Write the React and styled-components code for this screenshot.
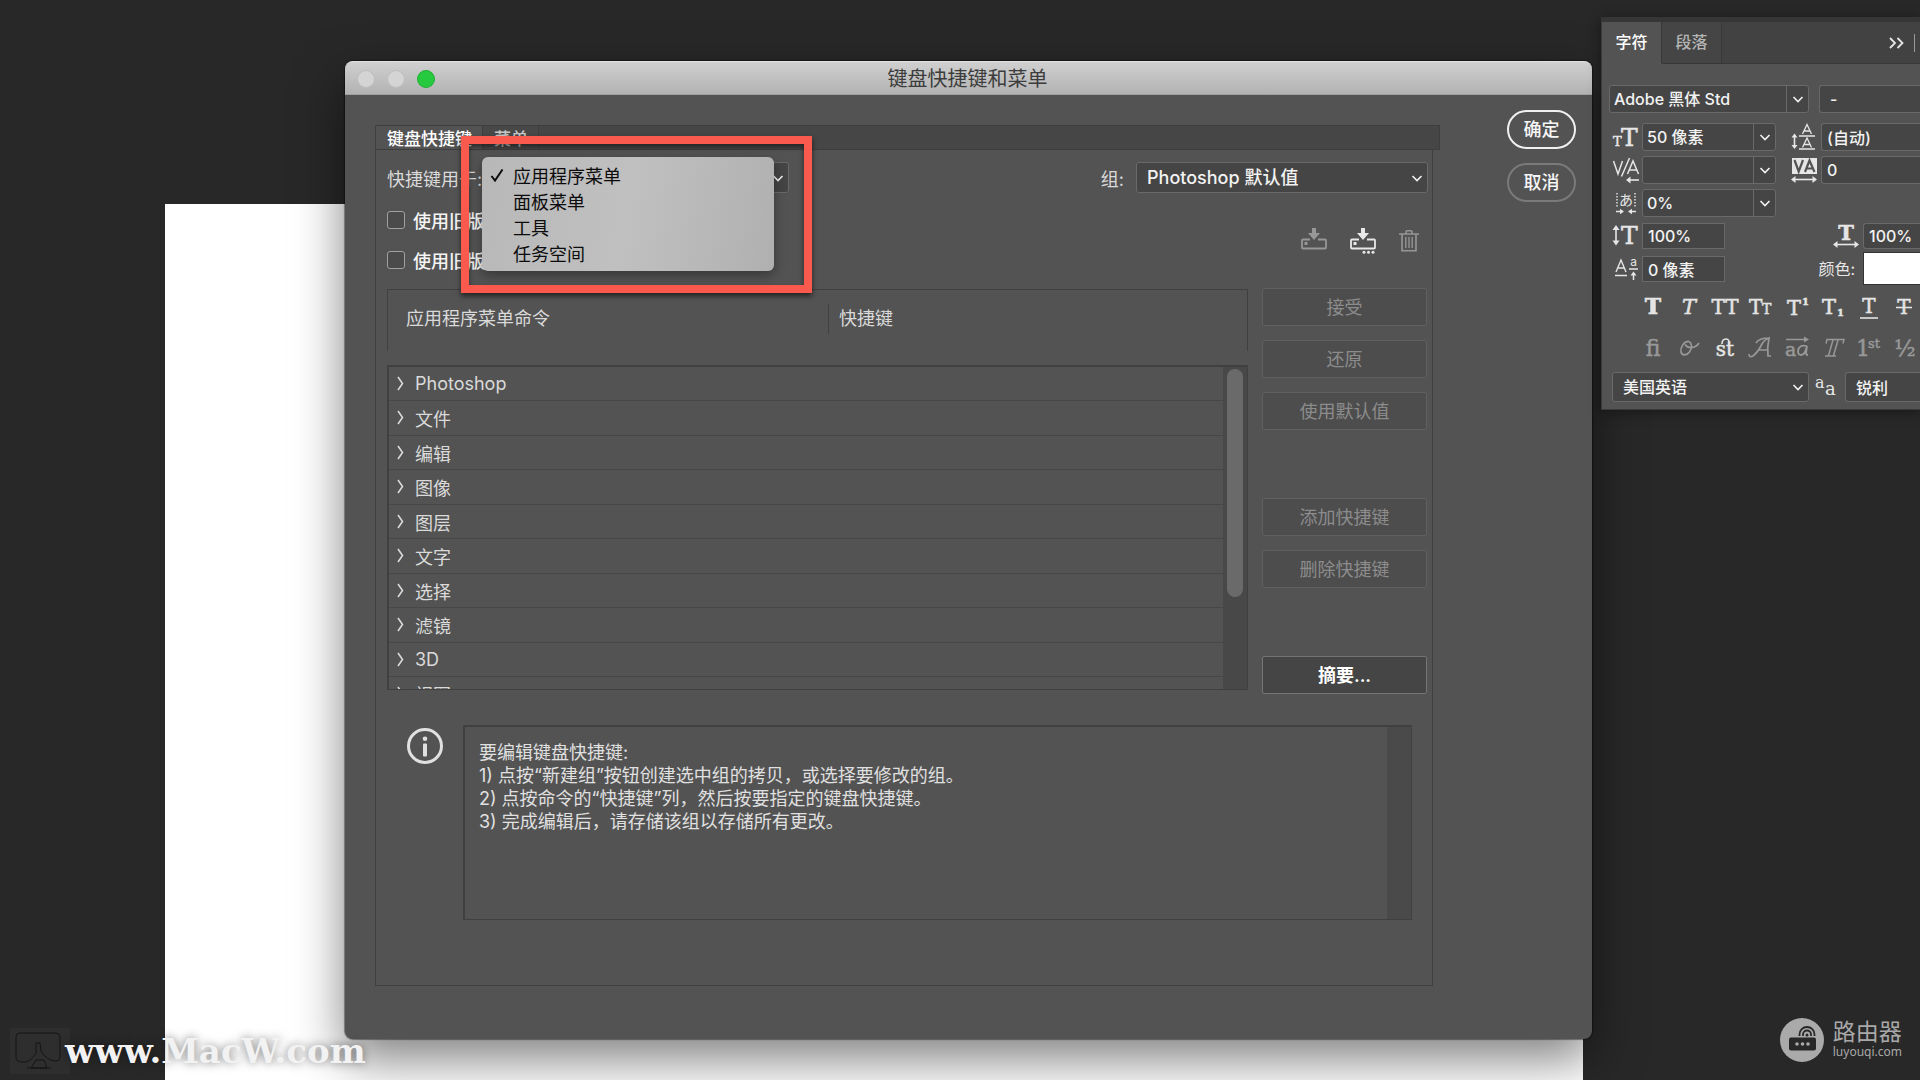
import React, { useState } from 'react';
import styled, { createGlobalStyle } from 'styled-components';

const SANS = "Inter, 'Noto Sans CJK SC', sans-serif";
const SERIF = "'DejaVu Serif', 'Liberation Serif', serif";

const menuItems = ['应用程序菜单', '面板菜单', '工具', '任务空间'];

const commands = [
  'Photoshop',
  '文件',
  '编辑',
  '图像',
  '图层',
  '文字',
  '选择',
  '滤镜',
  '3D',
  '视图',
];

const instructions = [
  '要编辑键盘快捷键:',
  '1) 点按“新建组”按钮创建选中组的拷贝，或选择要修改的组。',
  '2) 点按命令的“快捷键”列，然后按要指定的键盘快捷键。',
  '3) 完成编辑后，请存储该组以存储所有更改。',
];

const Chevron = () => (
  <svg width="12" height="8" viewBox="0 0 12 8" fill="none" stroke="currentColor">
    <path d="M1.5 2 6 6.500l4.500-4.500" strokeWidth="1.600" />
  </svg>
);

const RowArrow = () => (
  <svg width="8" height="14" viewBox="0 0 8 14" fill="none" stroke="currentColor">
    <path d="M2 0 6.500 6.500 2 13" strokeWidth="1.600" />
  </svg>
);

const SaveIcon = ({ dots }) => (
  <svg width="26" height="26" viewBox="0 0 26 26">
    <path d="M11 0h4v5h4l-6 7-6-7h4z" fill="currentColor" />
    <path
      d="M9 11.500H2q-1 0-1 1v7q0 1 1 1h22q1 0 1-1v-7q0-1-1-1h-7"
      fill="none"
      stroke="currentColor"
      strokeWidth="1.8"
    />
    <rect x="3.500" y="14" width="3" height="3" fill="currentColor" />
    {dots && (
      <g fill="currentColor">
        <circle cx="14" cy="24.300" r="1.500" />
        <circle cx="18.500" cy="24.300" r="1.500" />
        <circle cx="23" cy="24.300" r="1.500" />
      </g>
    )}
  </svg>
);

const TrashIcon = () => (
  <svg width="20" height="24" viewBox="0 0 20 24" fill="none" stroke="currentColor">
    <path d="M0 5h20M7 4.500V3q0-1.200 1.200-1.200h3.600Q13 1.800 13 3v1.500" strokeWidth="1.600" />
    <path d="M3 5v16.800h14V5" strokeWidth="1.600" />
    <path d="M6.800 8v11M10 8v11M13.200 8v11" strokeWidth="1.300" />
  </svg>
);

const InfoIcon = () => (
  <svg width="36" height="36" viewBox="0 0 36 36">
    <circle cx="18" cy="18" r="16.500" fill="none" stroke="currentColor" strokeWidth="3" />
    <circle cx="18" cy="10.800" r="2.300" fill="currentColor" />
    <rect x="16" y="15.500" width="4" height="13" rx="1" fill="currentColor" />
  </svg>
);

const CheckIcon = () => (
  <svg width="14" height="14" viewBox="0 0 14 14" fill="none" stroke="currentColor">
    <path d="M1.500 8 5 12.500 12.500 1.500" strokeWidth="2" />
  </svg>
);

const Glyph = ({ x = 0, y, size, bold, sans, thin, italic, anchor, children }) => (
  <text
    x={x}
    y={y}
    fontSize={size}
    fontFamily={sans ? SANS : SERIF}
    fontWeight={bold ? 700 : 400}
    fontStyle={italic ? 'italic' : 'normal'}
    textAnchor={anchor}
    fill="currentColor"
    stroke="currentColor"
    strokeWidth={sans || thin ? 0 : 0.5}
  >
    {children}
  </text>
);

const SizeIcon = () => (
  <svg width="26" height="24" viewBox="0 0 26 24">
    <Glyph y={21} size={13}>T</Glyph>
    <Glyph x={8} y={21} size={25}>T</Glyph>
  </svg>
);

const LeadingIcon = () => (
  <svg width="26" height="26" viewBox="0 0 26 26" stroke="currentColor" fill="none">
    <path d="M8 12h16M8 25h16" strokeWidth="1.400" />
    <path d="m11.500 10 4.500-9.500 4.500 9.500M13 7h6M11.500 23.500 16 14l4.500 9.500M13 20.500h6" strokeWidth="1.300" />
    <path d="M3.500 12v10" strokeWidth="1.600" />
    <path d="m.5 13.500 3-4 3 4zM.5 21l3 4 3-4z" fill="currentColor" stroke="none" />
  </svg>
);

const KerningIcon = () => (
  <svg width="26" height="26" viewBox="0 0 26 26" stroke="currentColor" fill="none">
    <path d="m.500 4 4.500 13L9.500 4M8.500 19.500 16.500 1M14.500 17 20 4l5.500 13M16.500 13h7" strokeWidth="1.500" />
    <path d="M16 23h10" strokeWidth="1.600" />
    <path d="m17.500 19.500-4.500 3.500 4.500 3.500z" fill="currentColor" stroke="none" />
  </svg>
);

const TrackingIcon = () => (
  <svg width="26" height="26" viewBox="0 0 26 26">
    <rect x="1" y="1" width="25" height="16" fill="currentColor" />
    <path d="m3.500 3 4.200 11.500L12 3M14 15l4.500-11.500 5 11.500M16 11.500h5.500" fill="none" stroke="#535353" strokeWidth="2.200" />
    <path d="M3 22.500h20" stroke="currentColor" strokeWidth="1.600" />
    <path d="M4.500 19 0 22.500 4.500 26zM21.500 19l4.500 3.500-4.500 3.500z" fill="currentColor" />
  </svg>
);

const TsumeIcon = () => (
  <svg width="22" height="24" viewBox="0 0 22 24">
    <path d="M2 2v15M20 2v15" stroke="currentColor" strokeWidth="1.400" strokeDasharray="1.500 1.500" />
    <Glyph x={11} y={14} size={14} sans anchor="middle">あ</Glyph>
    <path d="M1 20.500h5M21 20.500h-5" stroke="currentColor" strokeWidth="1.400" />
    <path d="M5 17.800 9 20.500l-4 2.700zM17 17.800l-4 2.700 4 2.700z" fill="currentColor" />
  </svg>
);

const VScaleIcon = () => (
  <svg width="28" height="24" viewBox="0 0 28 24">
    <path d="M4 4v15" stroke="currentColor" strokeWidth="1.600" />
    <path d="m.5 6 3.500-5 3.500 5zM.5 16.500l3.500 5 3.500-5z" fill="currentColor" />
    <Glyph x={9} y={20} size={25}>T</Glyph>
  </svg>
);

const HScaleIcon = () => (
  <svg width="26" height="24" viewBox="0 0 26 24">
    <Glyph x={13} y={16} size={21} bold anchor="middle">T</Glyph>
    <path d="M3 20.500h20" stroke="currentColor" strokeWidth="1.600" />
    <path d="M4.500 17 0 20.500 4.500 24zM21.500 17l4.500 3.500-4.500 3.500z" fill="currentColor" />
  </svg>
);

const BaselineIcon = () => (
  <svg width="24" height="24" viewBox="0 0 24 24" fill="none" stroke="currentColor">
    <path d="m2 15 5-12 5 12M4 11h6M1 18.500h12" strokeWidth="1.400" />
    <path d="M15 12h9M19.500 16v7" strokeWidth="1.500" />
    <path d="m16.500 18.500 3-4 3 4z" fill="currentColor" stroke="none" />
    <Glyph x={19.5} y={9} size={12} sans anchor="middle">a</Glyph>
  </svg>
);

const AntiAliasIcon = () => (
  <svg width="22" height="20" viewBox="0 0 22 20">
    <Glyph x={-1} y={11} size={16} thin>a</Glyph>
    <Glyph x={9} y={18} size={18} thin>a</Glyph>
  </svg>
);

const textStyles = [
  {
    label: '仿粗体',
    art: (
      <>
        <Glyph x={14} y={19} size={22} bold anchor="middle">T</Glyph>
        <path d="M12 5h4v13h-4z" fill="currentColor" stroke="currentColor" />
      </>
    ),
  },
  { label: '仿斜体', art: <Glyph x={14} y={19} size={21} italic anchor="middle">T</Glyph> },
  { label: '全部大写字母', art: <Glyph x={14} y={19} size={20} anchor="middle">TT</Glyph> },
  {
    label: '小型大写字母',
    art: (
      <>
        <Glyph x={2} y={19} size={20}>T</Glyph>
        <Glyph x={15} y={19} size={14}>T</Glyph>
      </>
    ),
  },
  {
    label: '上标',
    art: (
      <>
        <Glyph x={4} y={20} size={21}>T</Glyph>
        <Glyph x={19} y={10} size={10} bold>1</Glyph>
      </>
    ),
  },
  {
    label: '下标',
    art: (
      <>
        <Glyph x={3} y={19} size={21}>T</Glyph>
        <Glyph x={18} y={21} size={10} bold>1</Glyph>
      </>
    ),
  },
  {
    label: '下划线',
    art: (
      <>
        <Glyph x={14} y={18} size={20} anchor="middle">T</Glyph>
        <path d="M5 23h18" stroke="currentColor" strokeWidth="1.600" />
      </>
    ),
  },
  {
    label: '删除线',
    art: (
      <>
        <Glyph x={13} y={19} size={20} anchor="middle">T</Glyph>
        <path d="M5 12.500h16" stroke="currentColor" strokeWidth="1.600" />
      </>
    ),
  },
];

const openType = [
  { label: '标准连字', art: <Glyph x={14} y={19} size={22} anchor="middle">ﬁ</Glyph> },
  {
    label: '上下文替代字',
    art: (
      <g fill="none" stroke="currentColor" strokeWidth="1.700">
        <path d="M14 4.500c-5-.5-9 6-8 10.500.8 3.500 5.500 4 8.500 0 3-4 2.500-9-.5-10.500M10 7.500c3 4.500 10 4.500 14-1.500" />
      </g>
    ),
  },
  {
    label: '自由连字',
    on: true,
    art: (
      <>
        <Glyph x={14} y={19} size={20} anchor="middle">st</Glyph>
        <path d="M11 7q0-5 4-5t3 6" fill="none" stroke="currentColor" strokeWidth="1.600" />
      </>
    ),
  },
  {
    label: '花饰字',
    art: (
      <path
        d="M2 17q0 4 4 2Q11 15 15 7q2-4 7-6-2 9-1 18h3M11 13h10M22 1Q12 1 9 6"
        fill="none"
        stroke="currentColor"
        strokeWidth="1.700"
      />
    ),
  },
  {
    label: '文体替代字',
    art: (
      <>
        <Glyph x={2} y={19} size={19}>a</Glyph>
        <path
          d="M24 9q-8-2-9 5 0 4 3 4 4 0 6-9l-1 7q0 2 2 2"
          fill="none"
          stroke="currentColor"
          strokeWidth="1.800"
        />
        <path d="M3 2.500h20" stroke="currentColor" strokeWidth="1.500" />
        <path d="m21 -.5 5 3-5 3z" fill="currentColor" />
      </>
    ),
  },
  {
    label: '标题替代字',
    art: (
      <path
        d="M7 6.500 8 2.500h17l-1 4M14 3 9.500 18.500M19 3l-4.500 15.500M6 19h11"
        fill="none"
        stroke="currentColor"
        strokeWidth="1.500"
      />
    ),
  },
  {
    label: '序数字',
    art: (
      <>
        <Glyph x={1} y={19} size={22}>1</Glyph>
        <Glyph x={13} y={11} size={13}>st</Glyph>
      </>
    ),
  },
  { label: '分数字', art: <Glyph x={14} y={19} size={22} anchor="middle">½</Glyph> },
];

function Dropdown({ label, value, split, ...rest }) {
  return (
    <SelectBox $split={split} {...rest}>
      <select aria-label={label} defaultValue={value}>
        <option>{value}</option>
      </select>
      <span>
        <Chevron />
      </span>
    </SelectBox>
  );
}

function ShortcutDialog() {
  const [selected, setSelected] = useState(menuItems[0]);

  return (
    <Dialog role="dialog" aria-labelledby="dialog-title">
      <TitleBar>
        <Lights>
          <Light />
          <Light />
          <Light $on />
        </Lights>
        <h1 id="dialog-title">键盘快捷键和菜单</h1>
      </TitleBar>
      <DialogBody>
        <TabPanel>
          <DialogTabs role="tablist">
            <DialogTab role="tab" aria-selected="true" $active>
              键盘快捷键
            </DialogTab>
            <DialogTab role="tab" aria-selected="false">
              菜单
            </DialogTab>
          </DialogTabs>
          <Settings>
            <SettingsColumn>
              <Field>
                <label htmlFor="target">快捷键用于:</label>
                <TargetSelect>
                  <select id="target" value={selected} onChange={e => setSelected(e.target.value)}>
                    {menuItems.map(item => (
                      <option key={item}>{item}</option>
                    ))}
                  </select>
                  <span>
                    <Chevron />
                  </span>
                  <Callout />
                  <Popup role="listbox">
                    {menuItems.map(item => (
                      <PopupItem
                        key={item}
                        role="option"
                        aria-selected={item === selected}
                        onClick={() => setSelected(item)}
                      >
                        <i>{item === selected && <CheckIcon />}</i>
                        {item}
                      </PopupItem>
                    ))}
                  </Popup>
                </TargetSelect>
              </Field>
              <CheckLabel>
                <input type="checkbox" />
                使用旧版
              </CheckLabel>
              <CheckLabel>
                <input type="checkbox" />
                使用旧版
              </CheckLabel>
            </SettingsColumn>
            <SettingsColumn $end>
              <Field>
                <span>组:</span>
                <GroupSelect label="组" value="Photoshop 默认值" />
              </Field>
              <IconBar>
                <IconButton aria-label="存储" disabled>
                  <SaveIcon />
                </IconButton>
                <IconButton aria-label="新建组">
                  <SaveIcon dots />
                </IconButton>
                <IconButton aria-label="删除" disabled>
                  <TrashIcon />
                </IconButton>
              </IconBar>
            </SettingsColumn>
          </Settings>
          <Editor>
            <CommandFrame>
              <CommandTable>
                <thead>
                  <tr>
                    <th>应用程序菜单命令</th>
                    <th>快捷键</th>
                  </tr>
                </thead>
                <tbody>
                  {commands.map(name => (
                    <tr key={name}>
                      <td>
                        <RowArrow />
                        {name}
                      </td>
                    </tr>
                  ))}
                </tbody>
              </CommandTable>
              <Scrollbar>
                <Thumb />
              </Scrollbar>
            </CommandFrame>
            <SideButtons>
              <ButtonGroup>
                <PanelButton disabled>接受</PanelButton>
                <PanelButton disabled>还原</PanelButton>
                <PanelButton disabled>使用默认值</PanelButton>
              </ButtonGroup>
              <ButtonGroup>
                <PanelButton disabled>添加快捷键</PanelButton>
                <PanelButton disabled>删除快捷键</PanelButton>
              </ButtonGroup>
              <PanelButton>摘要...</PanelButton>
            </SideButtons>
          </Editor>
          <Info>
            <InfoIcon />
            <InfoBox>
              <div>
                {instructions.map(line => (
                  <p key={line}>{line}</p>
                ))}
              </div>
              <Track />
            </InfoBox>
          </Info>
        </TabPanel>
        <Actions>
          <PillButton $primary>确定</PillButton>
          <PillButton>取消</PillButton>
        </Actions>
      </DialogBody>
    </Dialog>
  );
}

function CharacterPanel() {
  return (
    <Panel>
      <PanelTabs>
        <PanelTab $active>字符</PanelTab>
        <PanelTab>段落</PanelTab>
        <Collapse aria-label="折叠">
          <svg width="15" height="12" viewBox="0 0 15 12" fill="none" stroke="currentColor">
            <path d="m1 1 5 5-5 5M8.500 1l5 5-5 5" strokeWidth="1.800" />
          </svg>
        </Collapse>
      </PanelTabs>
      <PanelBody>
        <FontRow>
          <Dropdown label="字体" value="Adobe 黑体 Std" split />
          <TextField aria-label="字体样式" defaultValue="-" $open $indent />
        </FontRow>
        <Metrics>
          <SizeIcon />
          <Dropdown label="字体大小" value="50 像素" split />
          <LeadingIcon />
          <TextField aria-label="行距" defaultValue="(自动)" $open />
          <KerningIcon />
          <Dropdown label="字距微调" value="" split />
          <TrackingIcon />
          <TextField aria-label="字距调整" defaultValue="0" $open />
          <TsumeIcon />
          <Dropdown label="比例间距" value="0%" split />
        </Metrics>
        <Scales>
          <VScaleIcon />
          <TextField aria-label="垂直缩放" defaultValue="100%" />
          <HScaleIcon />
          <TextField aria-label="水平缩放" defaultValue="100%" $open />
          <BaselineIcon />
          <TextField aria-label="基线偏移" defaultValue="0 像素" />
          <span>颜色:</span>
          <Swatch aria-label="文本颜色" />
        </Scales>
        <GlyphRow>
          {textStyles.map(item => (
            <GlyphButton key={item.label} aria-label={item.label} $on>
              <svg width="28" height="24" viewBox="0 0 28 24">
                {item.art}
              </svg>
            </GlyphButton>
          ))}
        </GlyphRow>
        <GlyphRow $low>
          {openType.map(item => (
            <GlyphButton key={item.label} aria-label={item.label} $on={item.on}>
              <svg width="28" height="24" viewBox="0 0 28 24">
                {item.art}
              </svg>
            </GlyphButton>
          ))}
        </GlyphRow>
        <LanguageRow>
          <WideSelect label="语言" value="美国英语" />
          <AntiAliasIcon />
          <TextField aria-label="消除锯齿" defaultValue="锐利" $open $indent />
        </LanguageRow>
      </PanelBody>
    </Panel>
  );
}

function App() {
  return (
    <Desktop>
      <GlobalStyle />
      <Canvas />
      <ShortcutDialog />
      <CharacterPanel />
      <MacMark>
        <svg width="60" height="46" viewBox="0 0 60 46" fill="none" stroke="#151515">
          <rect width="60" height="46" fill="#2e2e2e" stroke="none" />
          <path d="M10 5h36q4 0 4 4v20q0 4-4 4-9 0-15-10l-1-8h-4v10q-5 9-12 9-8 0-8-4V9q0-4 4-4M26 32h8l3 8H21zM17 40h24" />
        </svg>
        www.MacW.com
      </MacMark>
      <RouterMark>
        <svg width="44" height="44" viewBox="0 0 44 44">
          <circle cx="22" cy="22" r="22" fill="#aaa" />
          <rect x="9" y="19.500" width="27" height="13" rx="2" fill="#282828" />
          <g fill="#aaa">
            <circle cx="17" cy="26" r="1.800" />
            <circle cx="22.500" cy="26" r="1.800" />
            <circle cx="28" cy="26" r="1.800" />
          </g>
          <path
            d="M19.500 18v-1.500a7.500 7.500 0 0 1 15 0V18M23 18v-1.500a4 4 0 0 1 8 0V18"
            fill="none"
            stroke="#282828"
            strokeWidth="1.800"
          />
          <circle cx="27" cy="17" r="1.500" fill="#282828" />
        </svg>
        <div>
          <strong>路由器</strong>
          <span>luyouqi.com</span>
        </div>
      </RouterMark>
    </Desktop>
  );
}

const GlobalStyle = createGlobalStyle`
  * {
    box-sizing: border-box;
  }

  body {
    margin: 0;
    background: #282828;
  }

  button, input, select {
    margin: 0;
    font: inherit;
    color: inherit;
  }

  svg {
    flex: none;
    display: block;
    overflow: visible;
  }
`;

const Desktop = styled.main`
  position: relative;
  height: 100vh;
  overflow: hidden;
  background: #282828;
  color: #dadada;
  font-family: ${SANS};
  font-size: 18px;
`;

const Canvas = styled.div`
  position: absolute;
  top: 204px;
  left: 165px;
  right: 337px;
  bottom: 0;
  background: #fff;
`;

const Dialog = styled.section`
  position: absolute;
  top: 61px;
  left: 345px;
  right: 328px;
  bottom: 41px;
  display: flex;
  flex-direction: column;
  border-radius: 8px;
  background: #535353;
  box-shadow: 0 0 1px 1px rgba(0, 0, 0, 0.4), 0 20px 50px rgba(0, 0, 0, 0.5);
`;

const TitleBar = styled.header`
  position: relative;
  display: flex;
  align-items: center;
  justify-content: center;
  height: 34px;
  padding: 1px 2px 0 0;
  border-radius: 8px 8px 0 0;
  border-top: 1px solid #e2e2e2;
  border-bottom: 1px solid #a0a0a0;
  background: linear-gradient(#d0d0d0, #b2b2b2);
  color: #3c3c3c;

  h1 {
    margin: 0;
    font-size: 20px;
    line-height: 24px;
    font-weight: 400;
  }
`;

const Lights = styled.div`
  position: absolute;
  left: 12px;
  display: flex;
  gap: 12px;
`;

const Light = styled.span`
  width: 18px;
  height: 18px;
  border-radius: 50%;
  border: 1px solid ${props => (props.$on ? '#20b035' : '#bdbdbd')};
  background: ${props => (props.$on ? '#27c93f' : '#d4d4d4')};
`;

const DialogBody = styled.div`
  flex: 1;
  display: flex;
  align-items: stretch;
  gap: 74px;
  padding: 0 16px 53px 30px;
`;

const TabPanel = styled.div`
  flex: 1;
  margin-top: 30px;
  border: 1px solid #404040;
  border-top: 0;
`;

const DialogTabs = styled.div`
  display: flex;
  height: 25px;
  margin-right: -8px;
  border: 1px solid #3e3e3e;
  border-left: 0;
  background: #464646;
`;

const DialogTab = styled.button`
  padding: 3px 10px 0 11px;
  border: 0;
  border-right: 1px solid #3e3e3e;
  background: ${props => (props.$active ? '#535353' : '#484848')};
  color: ${props => (props.$active ? '#fff' : '#c8c8c8')};
  font-size: 17px;
  line-height: 20px;
  font-weight: 500;
`;

const Settings = styled.div`
  display: flex;
  justify-content: space-between;
  padding: 12px 4px 15px 11px;
`;

const SettingsColumn = styled.div`
  display: flex;
  flex-direction: column;
  gap: 15px;
  align-items: ${props => (props.$end ? 'flex-end' : 'flex-start')};
`;

const Field = styled.div`
  display: flex;
  align-items: center;
  gap: 12px;

  label {
    width: 83px;
    white-space: nowrap;
  }
`;

const SelectBox = styled.div`
  display: grid;
  min-width: 0;
  height: 28px;
  border: 1px solid #696969;
  border-radius: 3px;
  background: #454545;
  color: #f2f2f2;

  select {
    grid-area: 1 / 1;
    appearance: none;
    min-width: 0;
    padding: 0 24px 0 4px;
    border: 0;
    background: none;
    font-weight: 500;
  }

  > span {
    grid-area: 1 / 1;
    justify-self: end;
    display: flex;
    align-items: center;
    justify-content: center;
    width: 22px;
    border-left: 1px solid ${props => (props.$split ? '#696969' : 'transparent')};
    pointer-events: none;
  }
`;

const TargetSelect = styled(SelectBox)`
  position: relative;
  width: 307px;
  height: 31px;

  select {
    padding-left: 31px;
  }
`;

const GroupSelect = styled(Dropdown)`
  width: 292px;
  height: 31px;

  select {
    padding-left: 10px;
  }
`;

const WideSelect = styled(Dropdown)`
  width: 197px;
  height: 30px;

  select {
    padding-left: 10px;
  }
`;

const Callout = styled.div`
  position: absolute;
  top: -27px;
  left: -22px;
  width: 351px;
  height: 157px;
  border: 8px solid #fa5a4d;
  box-shadow: 0 3px 5px rgba(0, 0, 0, 0.6), inset 0 3px 5px rgba(0, 0, 0, 0.5);
  z-index: 1;
  pointer-events: none;
`;

const Popup = styled.ul`
  position: absolute;
  top: -6px;
  left: -1px;
  z-index: 2;
  width: 292px;
  margin: 0;
  padding: 5px 0;
  border-radius: 6px;
  background: linear-gradient(100deg, #b8b8b8, #c0c0c0 50%, #b0b0b0);
  box-shadow: 0 4px 12px rgba(0, 0, 0, 0.35);
  color: #0c0c0c;
  list-style: none;
`;

const PopupItem = styled.li`
  display: flex;
  align-items: center;
  height: 26px;
  padding-left: 8px;

  i {
    width: 23px;
  }
`;

const CheckLabel = styled.label`
  display: flex;
  align-items: center;
  gap: 8px;
  height: 25px;
  padding-bottom: 2px;
  color: #f4f4f4;
  font-weight: 500;

  input {
    appearance: none;
    width: 18px;
    height: 18px;
    border: 1px solid #a0a0a0;
    border-radius: 3px;
    background: #4b4b4b;
  }
`;

const IconBar = styled.div`
  display: flex;
  align-items: center;
  gap: 23px;
  padding: 20px 9px 0 0;
`;

const IconButton = styled.button`
  padding: 0;
  border: 0;
  background: none;
  color: ${props => (props.disabled ? '#979797' : '#e8e8e8')};
`;

const Editor = styled.div`
  display: grid;
  grid-template-columns: minmax(0, 1fr) 165px;
  gap: 14px;
  padding: 0 5px 0 11px;
`;

const CommandFrame = styled.div`
  display: grid;
  grid-template-columns: minmax(0, 1fr) 25px;
  grid-template-rows: 62px 325px;
  row-gap: 14px;
  padding-top: 1px;
`;

const CommandTable = styled.table`
  display: contents;

  thead {
    grid-area: 1 / 1 / 2 / 3;
    display: block;
    padding-top: 14px;
    border: 1px solid #404040;
    border-bottom: 0;
  }

  thead tr {
    display: flex;
  }

  th {
    width: 440px;
    padding: 0 0 0 18px;
    font-weight: 400;
    line-height: 30px;
    text-align: left;
  }

  th:first-child {
    flex: 0 0 440px;
  }

  th + th {
    flex: 1;
    padding-left: 10px;
    border-left: 1px solid #404040;
  }

  tbody {
    grid-area: 2 / 1;
    display: block;
    overflow: hidden;
    border: 1px solid #404040;
    border-width: 2px 0 1px 2px;
  }

  tbody tr {
    display: block;
    height: 34px;
    border-bottom: 1px solid #474747;
  }

  tbody tr:nth-child(even) {
    height: 35px;
  }

  td {
    display: flex;
    align-items: center;
    gap: 11px;
    height: 33px;
    padding: 0 0 0 7px;
  }
`;

const Scrollbar = styled.div`
  grid-area: 2 / 2;
  display: flex;
  justify-content: center;
  padding-top: 2px;
  border: 1px solid #404040;
  border-width: 2px 1px 1px 0;
  background: #484848;
`;

const Thumb = styled.div`
  width: 16px;
  height: 228px;
  border-radius: 8px;
  background: #6a6a6a;
`;

const SideButtons = styled.div`
  display: flex;
  flex-direction: column;
  gap: 68px;
`;

const ButtonGroup = styled.div`
  display: flex;
  flex-direction: column;
  gap: 14px;
`;

const PanelButton = styled.button`
  height: 38px;
  padding: 0 0 2px;
  border: 1px solid ${props => (props.disabled ? '#606060' : '#757575')};
  border-radius: 2px;
  background: ${props => (props.disabled ? '#4d4d4d' : '#454545')};
  color: ${props => (props.disabled ? '#8c8c8c' : '#fff')};
  font-weight: ${props => (props.disabled ? 400 : 600)};
`;

const Info = styled.div`
  display: flex;
  gap: 20px;
  padding: 31px 20px 0 31px;
  color: #e0e0e0;

  > svg {
    margin-top: 3px;
  }
`;

const InfoBox = styled.div`
  flex: 1;
  display: flex;
  justify-content: space-between;
  min-height: 195px;
  border: 1px solid #404040;
  border-width: 2px 1px 1px 2px;

  > div {
    padding: 14px;
  }

  p {
    margin: 0;
    line-height: 23px;
  }
`;

const Track = styled.span`
  width: 24px;
  background: #4a4a4a;
`;

const Actions = styled.div`
  display: flex;
  flex-direction: column;
  gap: 14px;
  padding-top: 15px;
`;

const PillButton = styled.button`
  width: 69px;
  height: 39px;
  padding: 0 0 3px;
  border: 2px solid ${props => (props.$primary ? '#f0f0f0' : '#7a7a7a')};
  border-radius: 20px;
  background: none;
  color: #f6f6f6;
  font-weight: 500;
`;

const Panel = styled.aside`
  position: absolute;
  top: 17px;
  right: 0;
  width: 319px;
  border: 1px solid #3a3a3a;
  border-top: 5px solid #363636;
  border-right: 0;
  background: #535353;
  box-shadow: 0 2px 12px rgba(0, 0, 0, 0.4);
  color: #e6e6e6;
  font-size: 16px;
`;

const PanelTabs = styled.div`
  display: flex;
  height: 42px;
  background: #424242;
`;

const PanelTab = styled.button`
  width: 60px;
  padding: 0 0 3px;
  border: 0;
  border-right: 1px solid #383838;
  border-bottom: 1px solid ${props => (props.$active ? '#535353' : '#383838')};
  background: ${props => (props.$active ? '#535353' : '#454545')};
  color: ${props => (props.$active ? '#fff' : '#b4b4b4')};
  font-weight: 500;
`;

const Collapse = styled.button`
  flex: 1;
  display: flex;
  align-items: center;
  justify-content: flex-end;
  gap: 10px;
  padding: 0 5px 0 0;
  border: 0;
  border-bottom: 1px solid #383838;
  background: none;

  &::after {
    content: '';
    width: 1px;
    height: 18px;
    background: #999;
  }
`;

const PanelBody = styled.div`
  padding: 21px 0 7px 7px;
`;

const FontRow = styled.div`
  display: grid;
  grid-template-columns: 200px 1fr;
  gap: 10px;
`;

const TextField = styled.input`
  width: 100%;
  min-width: 0;
  height: 28px;
  padding: 0 0 0 ${props => (props.$indent ? 10 : 5)}px;
  border: 1px solid #696969;
  border-right-width: ${props => (props.$open ? 0 : 1)}px;
  border-radius: ${props => (props.$open ? '3px 0 0 3px' : '0')};
  background: #454545;
  color: #f2f2f2;
  font-weight: 500;
`;

const Metrics = styled.div`
  display: grid;
  grid-template-columns: 33px 134px 45px 1fr;
  row-gap: 5px;
  align-items: center;
  padding-top: 10px;

  > svg {
    justify-self: center;
  }

  > svg:nth-of-type(even) {
    justify-self: end;
    margin-right: 4px;
  }
`;

const Scales = styled.div`
  display: grid;
  grid-template-columns: 33px 83px 138px 1fr;
  grid-auto-rows: 33px;
  align-items: center;
  padding-top: 2px;

  > svg {
    justify-self: center;
  }

  > svg:nth-of-type(2),
  > span {
    justify-self: end;
    margin-right: 4px;
  }

  > span {
    margin-right: 8px;
    padding-bottom: 2px;
  }

  input {
    height: 26px;
  }
`;

const Swatch = styled.button`
  height: 33px;
  border: 1px solid #333;
  border-right: 0;
  background: #fff;
`;

const GlyphRow = styled.div`
  display: flex;
  gap: 8px;
  padding: ${props => (props.$low ? 18 : 10)}px 0 0 30px;
`;

const GlyphButton = styled.button`
  padding: 0;
  border: 0;
  background: none;
  color: ${props => (props.$on ? '#e4e4e4' : '#989898')};
`;

const LanguageRow = styled.div`
  display: grid;
  grid-template-columns: 197px 22px 1fr;
  gap: 7px;
  align-items: center;
  padding: 11px 0 0 3px;

  input {
    height: 30px;
  }
`;

const MacMark = styled.div`
  position: absolute;
  left: 10px;
  bottom: 6px;
  display: flex;
  align-items: center;
  height: 46px;
  color: #f2f2f2;
  font: bold 34px/44px ${SERIF};
  text-shadow: 0 0 10px rgba(0, 0, 0, 0.5);

  svg {
    margin-right: -5px;
  }
`;

const RouterMark = styled.div`
  position: absolute;
  right: 18px;
  bottom: 18px;
  display: flex;
  align-items: center;
  gap: 9px;
  color: #a8a8a8;

  strong,
  span {
    display: block;
  }

  strong {
    font-size: 23px;
    line-height: 24px;
    font-weight: 400;
  }

  span {
    font: 12px/16px 'Noto Sans', sans-serif;
  }
`;

export default App;
